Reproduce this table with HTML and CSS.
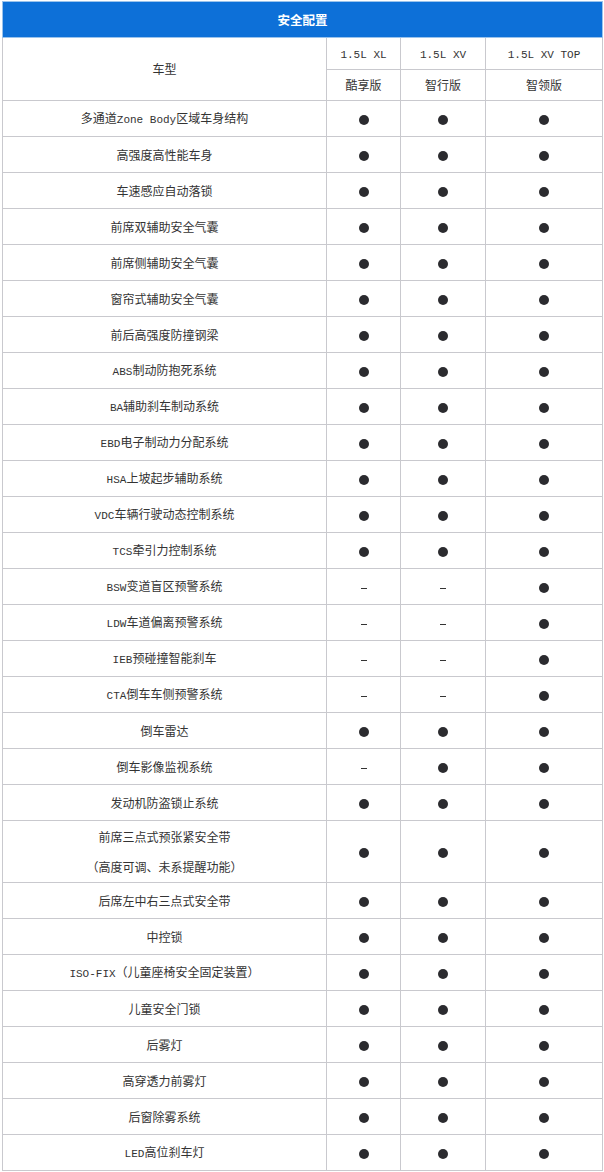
FILE: index.html
```html
<!DOCTYPE html>
<html lang="zh-CN">
<head>
<meta charset="utf-8">
<title>安全配置</title>
<link rel="stylesheet" href="styles.css">
</head>
<body>
<table class="spec">
  <colgroup>
    <col class="c-label">
    <col class="c-a">
    <col class="c-b">
    <col class="c-c">
  </colgroup>
  <thead>
    <tr class="title-row"><th colspan="4">安全配置</th></tr>
    <tr class="model-row">
      <td rowspan="2" class="label">车型</td>
      <td><span class="en">1.5L XL</span></td>
      <td><span class="en">1.5L XV</span></td>
      <td><span class="en">1.5L XV TOP</span></td>
    </tr>
    <tr class="trim-row">
      <td>酷享版</td>
      <td>智行版</td>
      <td>智领版</td>
    </tr>
  </thead>
  <tbody>
    <tr><td class="label">多通道<span class="en">Zone Body</span>区域车身结构</td><td><i class="dot"></i></td><td><i class="dot"></i></td><td><i class="dot"></i></td></tr>
    <tr><td class="label">高强度高性能车身</td><td><i class="dot"></i></td><td><i class="dot"></i></td><td><i class="dot"></i></td></tr>
    <tr><td class="label">车速感应自动落锁</td><td><i class="dot"></i></td><td><i class="dot"></i></td><td><i class="dot"></i></td></tr>
    <tr><td class="label">前席双辅助安全气囊</td><td><i class="dot"></i></td><td><i class="dot"></i></td><td><i class="dot"></i></td></tr>
    <tr><td class="label">前席侧辅助安全气囊</td><td><i class="dot"></i></td><td><i class="dot"></i></td><td><i class="dot"></i></td></tr>
    <tr><td class="label">窗帘式辅助安全气囊</td><td><i class="dot"></i></td><td><i class="dot"></i></td><td><i class="dot"></i></td></tr>
    <tr><td class="label">前后高强度防撞钢梁</td><td><i class="dot"></i></td><td><i class="dot"></i></td><td><i class="dot"></i></td></tr>
    <tr><td class="label"><span class="en">ABS</span>制动防抱死系统</td><td><i class="dot"></i></td><td><i class="dot"></i></td><td><i class="dot"></i></td></tr>
    <tr><td class="label"><span class="en">BA</span>辅助刹车制动系统</td><td><i class="dot"></i></td><td><i class="dot"></i></td><td><i class="dot"></i></td></tr>
    <tr><td class="label"><span class="en">EBD</span>电子制动力分配系统</td><td><i class="dot"></i></td><td><i class="dot"></i></td><td><i class="dot"></i></td></tr>
    <tr><td class="label"><span class="en">HSA</span>上坡起步辅助系统</td><td><i class="dot"></i></td><td><i class="dot"></i></td><td><i class="dot"></i></td></tr>
    <tr><td class="label"><span class="en">VDC</span>车辆行驶动态控制系统</td><td><i class="dot"></i></td><td><i class="dot"></i></td><td><i class="dot"></i></td></tr>
    <tr><td class="label"><span class="en">TCS</span>牵引力控制系统</td><td><i class="dot"></i></td><td><i class="dot"></i></td><td><i class="dot"></i></td></tr>
    <tr><td class="label"><span class="en">BSW</span>变道盲区预警系统</td><td><i class="dash"></i></td><td><i class="dash"></i></td><td><i class="dot"></i></td></tr>
    <tr><td class="label"><span class="en">LDW</span>车道偏离预警系统</td><td><i class="dash"></i></td><td><i class="dash"></i></td><td><i class="dot"></i></td></tr>
    <tr><td class="label"><span class="en">IEB</span>预碰撞智能刹车</td><td><i class="dash"></i></td><td><i class="dash"></i></td><td><i class="dot"></i></td></tr>
    <tr><td class="label"><span class="en">CTA</span>倒车车侧预警系统</td><td><i class="dash"></i></td><td><i class="dash"></i></td><td><i class="dot"></i></td></tr>
    <tr><td class="label">倒车雷达</td><td><i class="dot"></i></td><td><i class="dot"></i></td><td><i class="dot"></i></td></tr>
    <tr><td class="label">倒车影像监视系统</td><td><i class="dash"></i></td><td><i class="dot"></i></td><td><i class="dot"></i></td></tr>
    <tr><td class="label">发动机防盗锁止系统</td><td><i class="dot"></i></td><td><i class="dot"></i></td><td><i class="dot"></i></td></tr>
    <tr class="tall"><td class="label"><span class="line">前席三点式预张紧安全带</span><span class="line">（高度可调、未系提醒功能）</span></td><td><i class="dot"></i></td><td><i class="dot"></i></td><td><i class="dot"></i></td></tr>
    <tr><td class="label">后席左中右三点式安全带</td><td><i class="dot"></i></td><td><i class="dot"></i></td><td><i class="dot"></i></td></tr>
    <tr><td class="label">中控锁</td><td><i class="dot"></i></td><td><i class="dot"></i></td><td><i class="dot"></i></td></tr>
    <tr><td class="label"><span class="en">ISO-FIX</span>（儿童座椅安全固定装置）</td><td><i class="dot"></i></td><td><i class="dot"></i></td><td><i class="dot"></i></td></tr>
    <tr><td class="label">儿童安全门锁</td><td><i class="dot"></i></td><td><i class="dot"></i></td><td><i class="dot"></i></td></tr>
    <tr><td class="label">后雾灯</td><td><i class="dot"></i></td><td><i class="dot"></i></td><td><i class="dot"></i></td></tr>
    <tr><td class="label">高穿透力前雾灯</td><td><i class="dot"></i></td><td><i class="dot"></i></td><td><i class="dot"></i></td></tr>
    <tr><td class="label">后窗除雾系统</td><td><i class="dot"></i></td><td><i class="dot"></i></td><td><i class="dot"></i></td></tr>
    <tr><td class="label"><span class="en">LED</span>高位刹车灯</td><td><i class="dot"></i></td><td><i class="dot"></i></td><td><i class="dot"></i></td></tr>
  </tbody>
</table>
</body>
</html>
```

FILE: styles.css
```css
html, body {
  margin: 0;
  padding: 0;
  background: #ffffff;
}

body {
  font-family: "Noto Sans CJK SC", "Noto Sans", sans-serif;
  font-size: 12px;
  color: #333333;
}

.spec {
  margin: 1px 0 0 2px;
  width: 600px;
  border-collapse: collapse;
  table-layout: fixed;
}

.c-label { width: 324px; }
.c-a { width: 74px; }
.c-b { width: 85px; }
.c-c { width: 117px; }

.spec td,
.spec th {
  border: 1px solid #c9c9ce;
  padding: 0;
  text-align: center;
  vertical-align: middle;
  line-height: 16px;
  height: 36px;
  box-sizing: border-box;
}

.title-row th {
  background: #0d70d8;
  color: #ffffff;
  font-weight: bold;
  font-size: 12.5px;
  height: 36px;
  border-color: #9ac3ec;
}

.model-row td { height: 32px; }
.trim-row td { height: 31px; }

.spec .tall td { height: 62px; }

.line {
  display: block;
  line-height: 30px;
}

.en {
  font-family: "Liberation Mono", monospace;
  font-size: 11px;
}

.dot {
  display: inline-block;
  width: 10px;
  height: 10px;
  border-radius: 50%;
  background: #2b2b2f;
  vertical-align: middle;
}

.dash {
  display: inline-block;
  width: 6px;
  height: 1px;
  background: #333333;
  vertical-align: middle;
}
```
